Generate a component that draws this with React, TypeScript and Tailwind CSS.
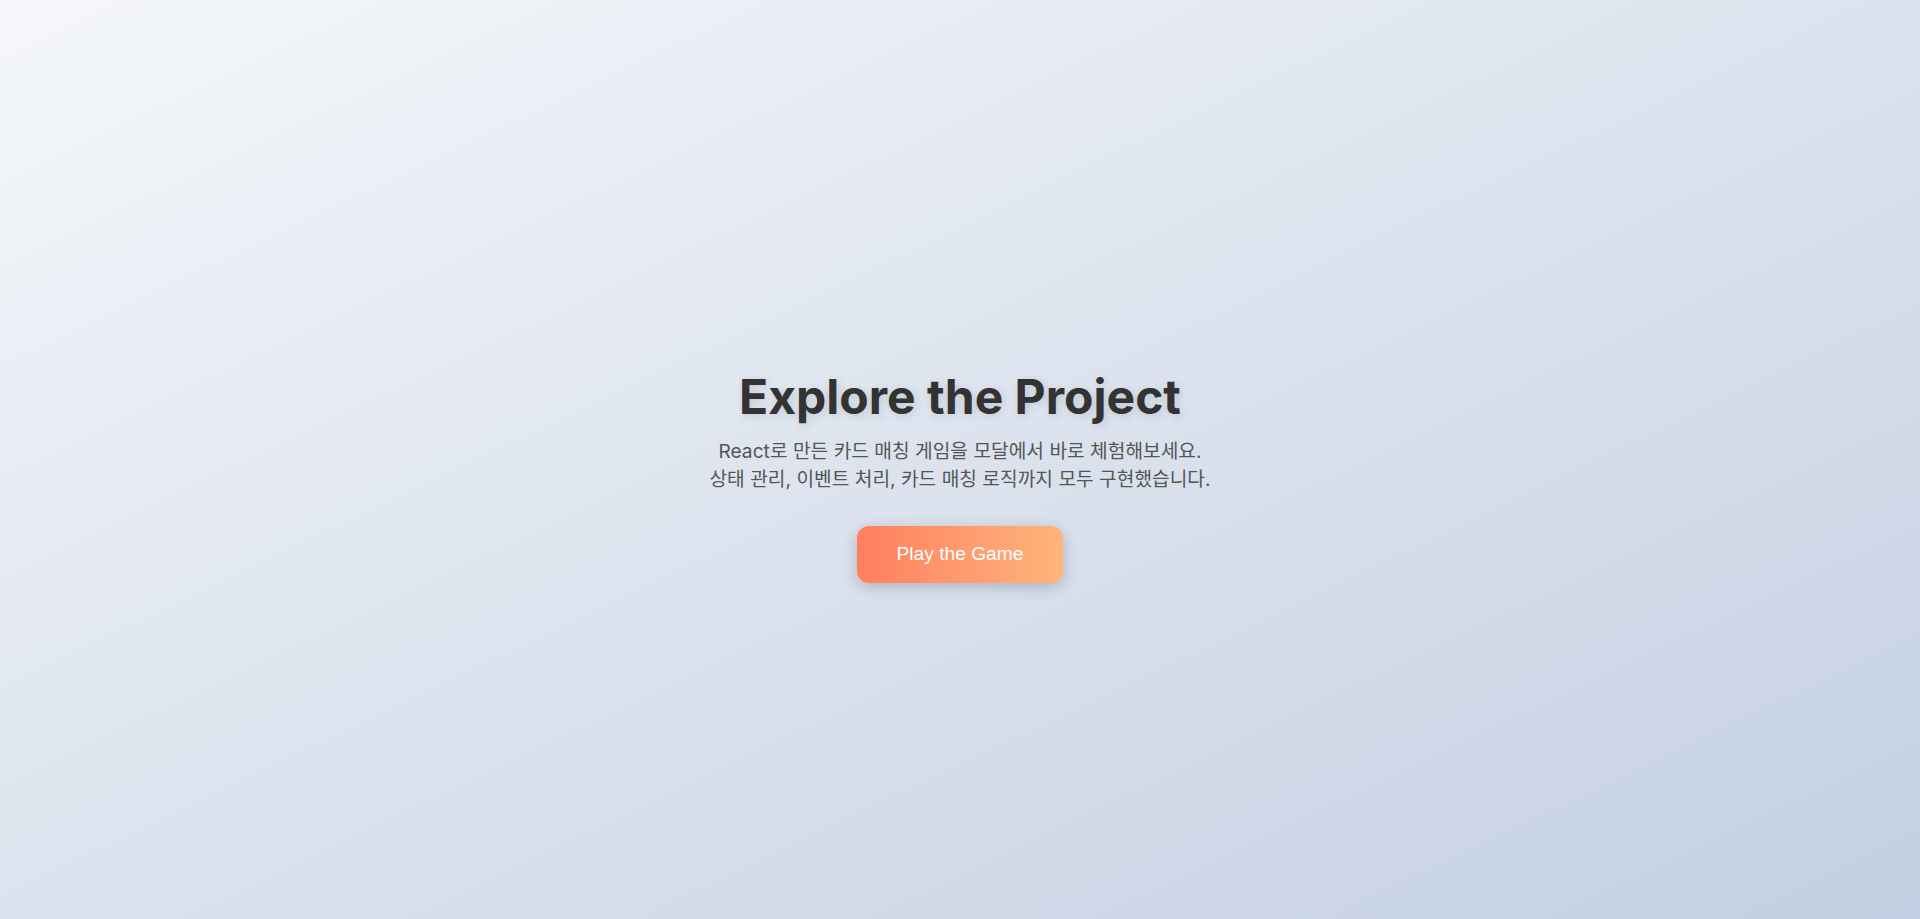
export default function App() {
  return (
    <div className="min-h-screen w-full flex items-center justify-center bg-gradient-to-br from-[#f5f7fa] to-[#c3cfe2] font-['Inter','Noto_Sans_CJK_KR',sans-serif]">
      <div className="flex flex-col items-center text-center pt-8">
        <h1 className="text-[48px] font-bold leading-[1.2] text-[#333] [text-shadow:2px_2px_8px_rgba(0,0,0,0.12)]">
          Explore the Project
        </h1>
        <p className="mt-[11px] text-[19.2px] leading-[1.5] text-[#555]">
          React로 만든 카드 매칭 게임을 모달에서 바로 체험해보세요.
          <br />
          상태 관리, 이벤트 처리, 카드 매칭 로직까지 모두 구현했습니다.
        </p>
        <button className="mt-8 px-10 py-[14px] leading-[1.5] rounded-xl bg-gradient-to-r from-[#ff7e5f] to-[#feb47b] text-white text-[19.2px] font-['Liberation_Sans',Arial,sans-serif] shadow-[0_4px_15px_rgba(0,0,0,0.2)]">
          Play the Game
        </button>
      </div>
    </div>
  );
}
